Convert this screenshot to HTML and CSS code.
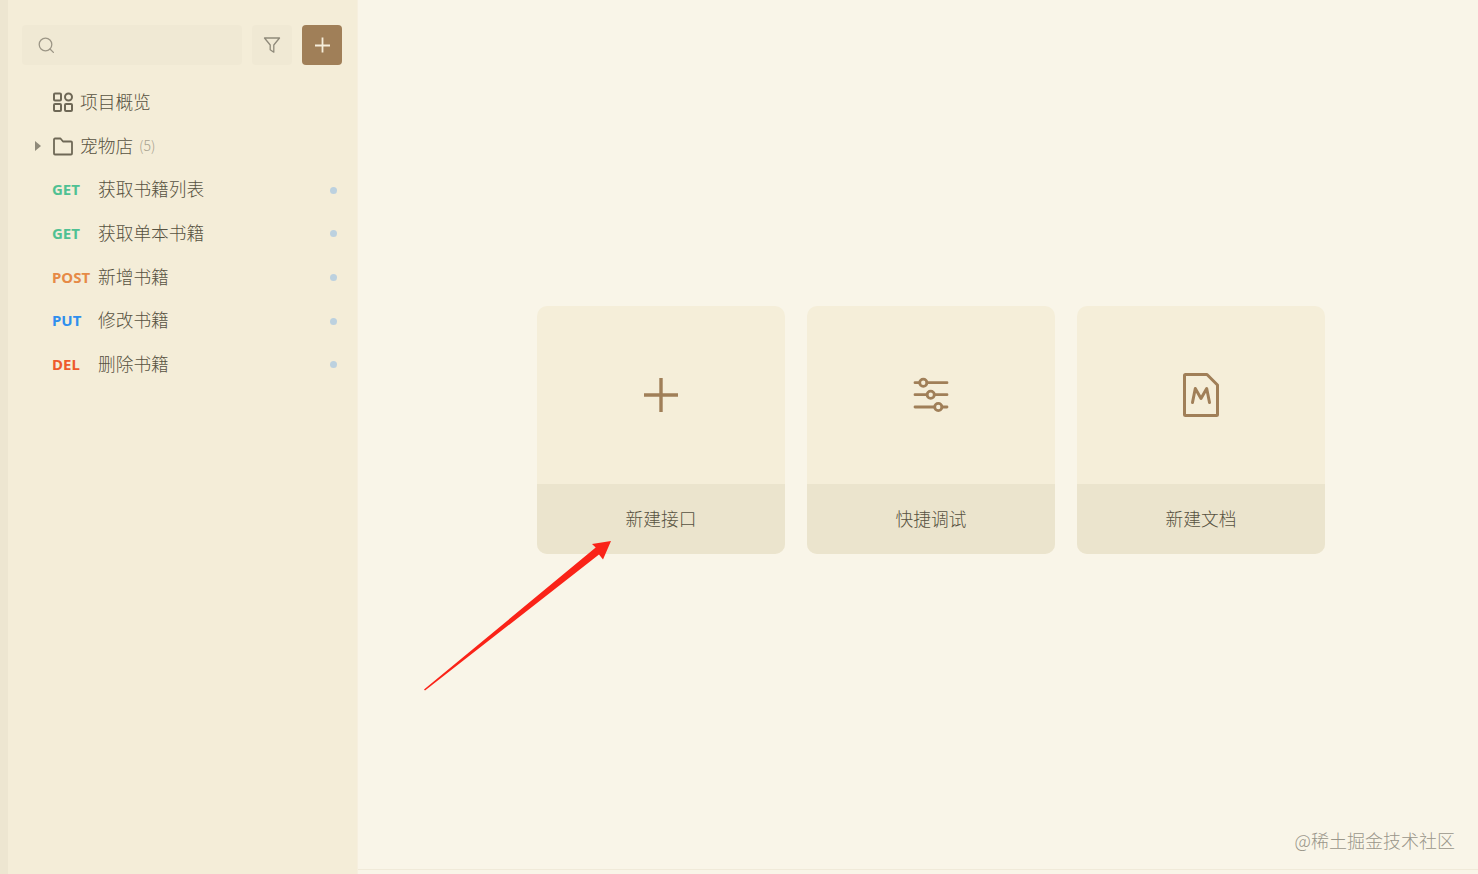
FILE: index.html
```html
<!DOCTYPE html>
<html lang="zh-CN">
<head>
    <meta charset="UTF-8">
    <title>项目概览</title>
    <link rel="stylesheet" href="styles.css">
</head>
<body>
    <aside class="sidebar">
        <div class="toolbar">
            <div class="search">
                <svg width="18" height="18" viewBox="0 0 18 18" fill="none" stroke="#9c9686" stroke-width="1.3">
                    <circle cx="8.500" cy="8.500" r="6.300"/>
                    <path d="M13 13l3.400 3.400" stroke-linecap="round"/>
                </svg>
            </div>
            <div class="filter-btn">
                <svg width="18" height="18" viewBox="0 0 18 18" fill="none" stroke="#8f8a7a" stroke-width="1.3" stroke-linejoin="round">
                    <path d="M1.500 2h15l-5.700 7v7.200l-3.600-2.400V9z"/>
                </svg>
            </div>
            <div class="add-btn">
                <svg width="18" height="18" viewBox="0 0 18 18" stroke="#f6eedb" stroke-width="1.800">
                    <path d="M9.500 1.500v15M2 9.500h15"/>
                </svg>
            </div>
        </div>

        <ul class="tree">
            <li class="tree-row">
                <svg class="tree-icon" width="22" height="22" viewBox="0 0 22 22" fill="none" stroke="#6e6856" stroke-width="2">
                    <rect x="2" y="2.500" width="7" height="7" rx="1"/>
                    <rect x="13" y="2.500" width="7" height="7" rx="3.500"/>
                    <rect x="2" y="13" width="7" height="7" rx="1"/>
                    <rect x="13" y="13" width="7" height="7" rx="1"/>
                </svg>
                <span class="row-name">项目概览</span>
            </li>
            <li class="tree-row">
                <span class="caret"></span>
                <svg class="tree-icon" width="22" height="22" viewBox="0 0 22 22" fill="none" stroke="#6e6856" stroke-width="1.800" stroke-linejoin="round">
                    <path d="M2 4.500a1 1 0 0 1 1-1h5.500l2.500 3h8a1 1 0 0 1 1 1v11a1 1 0 0 1-1 1H3a1 1 0 0 1-1-1z"/>
                </svg>
                <span class="row-name">宠物店</span>
                <span class="count">(5)</span>
            </li>
            <li class="api-row"><span class="method get">GET</span><span class="row-name">获取书籍列表</span><i class="dot"></i></li>
            <li class="api-row"><span class="method get">GET</span><span class="row-name">获取单本书籍</span><i class="dot"></i></li>
            <li class="api-row"><span class="method post">POST</span><span class="row-name">新增书籍</span><i class="dot"></i></li>
            <li class="api-row"><span class="method put">PUT</span><span class="row-name">修改书籍</span><i class="dot"></i></li>
            <li class="api-row"><span class="method del">DEL</span><span class="row-name">删除书籍</span><i class="dot"></i></li>
        </ul>
    </aside>

    <main class="main">
        <div class="cards">
            <div class="card">
                <div class="card-icon">
                    <svg width="36" height="36" viewBox="0 0 36 36" stroke="#a07f58" stroke-width="3.400">
                        <path d="M18 1v34M1 18h34"/>
                    </svg>
                </div>
                <div class="card-label">新建接口</div>
            </div>
            <div class="card">
                <div class="card-icon">
                    <svg width="36" height="36" viewBox="0 0 36 36" fill="none" stroke="#a07f58" stroke-width="2.800" stroke-linecap="round">
                        <path d="M2 5.700h4.500M14 5.700h20M2 17.700h12M21.500 17.700h12.500M2 30h19.500M29 30h5"/>
                        <circle cx="10.300" cy="5.700" r="3.600"/>
                        <circle cx="17.700" cy="17.700" r="3.600"/>
                        <circle cx="25.300" cy="30" r="3.600"/>
                    </svg>
                </div>
                <div class="card-label">快捷调试</div>
            </div>
            <div class="card">
                <div class="card-icon">
                    <svg width="38" height="46" viewBox="0 0 38 46" fill="none" stroke="#a07f58" stroke-width="3" stroke-linejoin="round">
                        <path d="M2.500 3.500a1 1 0 0 1 1-1h21.500l10.500 10.500v29.500a1 1 0 0 1-1 1h-31a1 1 0 0 1-1-1z"/>
                        <path d="M10.500 30.500l2.800-14 5.700 10 5.700-10 2.800 14" stroke-linecap="round"/>
                    </svg>
                </div>
                <div class="card-label">新建文档</div>
            </div>
        </div>
    </main>

    <!-- annotation drawn over the page -->
    <svg class="arrow" width="200" height="160" viewBox="0 0 200 160">
        <path d="M0 149.500L171.700 7.500L168 4L187 1L179 19.500L175 14.500L1 150.500z" fill="#fa2318"/>
    </svg>
    <div class="watermark">@稀土掘金技术社区</div>
</body>
</html>
```

FILE: styles.css
```css
* {
    box-sizing: border-box;
}

html, body {
    height: 100%;
}

body {
    margin: 0;
    display: flex;
    height: 874px;
    overflow: hidden;
    font-family: "Noto Sans CJK SC", "Noto Sans", sans-serif;
    font-weight: 300;
    color: #575241;
    background: #f9f5e8;
}

/* Sidebar */
.sidebar {
    width: 358px;
    flex-shrink: 0;
    padding: 25px 15px 0 14px;
    background: #f4edd8;
    border-left: 8px solid #ede6d1;
    border-right: 1px solid #f6efde;
}

.toolbar {
    display: flex;
    gap: 10px;
    height: 40px;
    margin-bottom: 15px;
}

.search {
    width: 220px;
    display: flex;
    align-items: center;
    padding-left: 15px;
    background: #f0e9d4;
    border-radius: 4px;
}

.filter-btn, .add-btn {
    width: 40px;
    display: flex;
    align-items: center;
    justify-content: center;
    border-radius: 4px;
}

.filter-btn {
    background: #f0e9d4;
}

.add-btn {
    background: #a07f58;
}

.tree {
    list-style: none;
    margin: 0;
    padding: 0;
}

.tree-row, .api-row {
    position: relative;
    display: flex;
    align-items: center;
    height: 43.700px;
    padding-left: 30px;
    font-size: 17.700px;
    white-space: nowrap;
}

.row-name {
    margin-bottom: 2px;
}

.tree-icon {
    margin-right: 6px;
}

.caret {
    position: absolute;
    left: 13px;
    top: 17px;
    border-left: 6px solid #8f8a7a;
    border-top: 5px solid transparent;
    border-bottom: 5px solid transparent;
}

.count {
    margin-left: 6px;
    margin-bottom: 2px;
    font-size: 14px;
    color: #a8a28f;
}

.method {
    width: 46px;
    flex-shrink: 0;
    font-family: "Noto Sans", sans-serif;
    font-size: 15px;
    font-weight: 700;
}

.get {
    color: #4fc193;
}

.post {
    color: #e68a46;
}

.put {
    color: #2f8fee;
}

.del {
    color: #ee5a2c;
}

.dot {
    width: 7px;
    height: 7px;
    margin: 2px 5px 0 auto;
    border-radius: 50%;
    background: #bcd1df;
}

/* Main area */
.main {
    flex: 1;
    height: 870px;
    display: flex;
    align-items: center;
    justify-content: center;
    padding: 0 0 10px 26px;
    border-bottom: 1px solid #f0ead9;
}

.cards {
    display: flex;
    gap: 22px;
}

.card {
    width: 248px;
    height: 248px;
    display: flex;
    flex-direction: column;
    border-radius: 10px;
    overflow: hidden;
    background: #f5eed9;
}

.card-icon {
    flex: 1;
    display: flex;
    align-items: center;
    justify-content: center;
    padding-bottom: 1px;
    margin-top: 1px;
}

.card-label {
    height: 70px;
    display: flex;
    align-items: center;
    justify-content: center;
    padding-bottom: 2px;
    font-size: 17.700px;
    background: #ebe4cd;
}

/* Overlays */
.arrow {
    position: absolute;
    left: 424px;
    top: 540px;
}

.watermark {
    position: absolute;
    right: 23px;
    top: 827px;
    font-size: 18px;
    color: #9a968a;
}
```
